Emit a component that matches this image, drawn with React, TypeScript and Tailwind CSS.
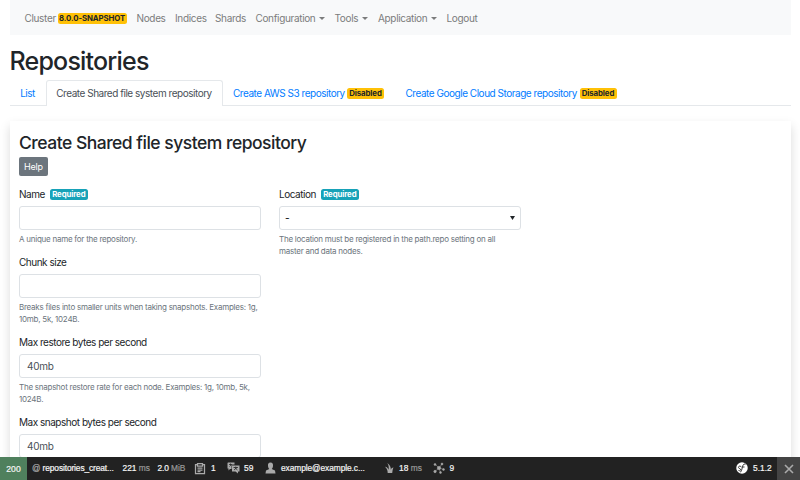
import type { ReactNode } from "react";

function Caret() {
  return (
    <svg viewBox="0 0 6 3" className="h-[3px] w-[6px] shrink-0 fill-[#7b7c7c]">
      <path d="M0 0h6L3 3z" />
    </svg>
  );
}

function Badge({ tone, width, children }: { tone: "warning" | "info"; width: string; children: ReactNode }) {
  const colors = tone === "warning" ? "bg-[#ffc107] text-[#212529]" : "bg-[#17a2b8] text-white";
  return (
    <span
      className={`flex h-[11px] shrink-0 items-center justify-center whitespace-nowrap rounded-[2.5px] text-[7.8px] font-bold leading-none tracking-[-0.1px] ${colors} ${width}`}
    >
      {children}
    </span>
  );
}

function NavItem({ width, caret, children }: { width: string; caret?: boolean; children: ReactNode }) {
  return (
    <a className={`flex shrink-0 items-center justify-between whitespace-nowrap ${width}`}>
      <span>{children}</span>
      {caret && <Caret />}
    </a>
  );
}

function Field({ label, required, help, children }: { label: string; required?: boolean; help?: ReactNode; children?: ReactNode }) {
  return (
    <div className="mb-[7px] w-[242px]">
      <div className="flex h-[22px] items-start gap-[5px] whitespace-nowrap leading-[20px] tracking-[-0.48px]">
        {label}
        {required && (
          <span className="mt-[5px]">
            <Badge tone="info" width="w-[38px]">Required</Badge>
          </span>
        )}
      </div>
      <div className="flex h-[24px] items-center rounded-[3px] border border-[#dde1e5] px-[7px] tracking-[-0.25px] text-[#495057]">{children}</div>
      <div className="mt-[3px] whitespace-nowrap text-[8px] leading-[12px] tracking-[-0.25px] text-[#6c757d]">{help}</div>
    </div>
  );
}

function Toolbar() {
  return (
    <footer className="absolute inset-x-0 bottom-0 flex h-[23px] items-center whitespace-nowrap bg-[#222] font-['Liberation_Sans',Arial,sans-serif] text-[8.4px] text-[#f5f5f5] [-webkit-text-stroke:0.2px]">
      <div className="flex h-full w-[27px] items-center justify-center bg-[#4f805d] pt-px text-[8.6px]">200</div>
      <div className="ml-[5px] w-[90.5px] tracking-[-0.12px]"><span className="text-[#aaa]">@</span> repositories_creat...</div>
      <div className="w-[35px]">221 <span className="text-[#999]">ms</span></div>
      <div className="w-[36.5px] tracking-[-0.1px]">2.0 <span className="text-[#999]">MiB</span></div>
      <div className="flex w-[33px] items-center gap-[5px]">
        <svg viewBox="0 0 24 24" className="h-[13px] w-[12px] fill-none stroke-[#aaa] stroke-[2.5]">
          <path d="M6 4H3v18h18V4h-3M7 2h10v5H7zM7 11h10M7 15h10M7 18h6" />
        </svg>
        1
      </div>
      <div className="flex w-[38px] items-center gap-[4px]">
        <svg viewBox="0 0 26 24" className="h-[12px] w-[13px]">
          <path d="M2 1h13v4H9v9H6l-3 3v-4H1V2z" fill="#aaa" />
          <path d="M10 7h15v12h-3v4l-5-4h-7z" fill="#aaa" />
          <path d="M4 5h6M7 3v3M5 9l3-3M13 11h9M17.5 9v2M14 16l6-5M15 11l6 5" fill="none" stroke="#222" strokeWidth="1.5" />
        </svg>
        59
      </div>
      <div className="flex w-[120px] items-center gap-[5px] tracking-[-0.08px]">
        <svg viewBox="0 0 20 24" className="h-[12px] w-[11px] fill-[#aaa]">
          <path d="M10 1c-4 0-5.5 3-5 7 .3 3 1.5 5 2.5 6L1 17l-1 6h20l-1-6-6.5-3c1-1 2.2-3 2.5-6 .5-4-1-7-5-7z" />
        </svg>
        example@example.c...
      </div>
      <div className="flex w-[47.5px] items-center gap-[5px]">
        <svg viewBox="0 0 20 24" className="h-[12px] w-[9px]">
          <path d="M0 9c4 0 7 4 8 7 1-6 0-11-3-15 6 4 8 9 8 15 1-3 3-5 6-5-2 3-2 7-3 12H6C6 17 4 12 0 9z" fill="#aaa" />
        </svg>
        <span>18 <span className="text-[#999]">ms</span></span>
      </div>
      <div className="flex items-center gap-[5px]">
        <svg viewBox="0 0 24 24" className="h-[12px] w-[12px] fill-[#aaa] stroke-[#aaa]">
          <path d="m12 12-8-8m8 8 6-8m-6 8 10 3m-10-3-8 7m8-7 3 9" strokeWidth="1" />
          <circle cx="12" cy="12" r="3.5" /><circle cx="4" cy="5" r="2" /><circle cx="18" cy="4" r="2" />
          <circle cx="21" cy="15" r="2" /><circle cx="4" cy="19" r="2.5" /><circle cx="15" cy="21" r="2" />
        </svg>
        9
      </div>
      <div className="ml-auto flex w-[41px] items-center gap-[5px]">
        <svg viewBox="0 0 24 24" className="h-[12px] w-[12px]">
          <circle cx="12" cy="12" r="11.5" fill="#fff" />
          <path d="M10 9c-6-3-6 4-3 4 4 1 2 6-2 4M8 20c4 1 4-12 7-15 2-2 4 0 3 1M11 10h6" fill="none" stroke="#222" strokeWidth="1.8" />
        </svg>
        5.1.2
      </div>
      <div className="flex h-full w-[23px] items-center justify-center bg-[#444]">
        <svg viewBox="0 0 10 10" className="h-[10px] w-[10px] fill-none stroke-[#aaa] stroke-[1.6]">
          <path d="m1 1 8 8M9 1 1 9" />
        </svg>
      </div>
    </footer>
  );
}

export default function App() {
  return (
    <div className="relative h-[480px] w-[800px] overflow-hidden bg-white px-[9.5px] font-[Inter,sans-serif] text-[10px] text-[#212529]">
      <nav className="flex h-[35px] items-center gap-[10px] bg-[#f8f9fa] pl-[15px] pt-px tracking-[-0.34px] text-[#7b7c7c]">
        <a className="flex w-[102px] shrink-0 items-center justify-between">
          Cluster
          <span className="mt-px"><Badge tone="warning" width="w-[69px]">8.0.0-SNAPSHOT</Badge></span>
        </a>
        <NavItem width="w-[28.5px]">Nodes</NavItem>
        <NavItem width="w-[30px]">Indices</NavItem>
        <NavItem width="w-[30.5px]">Shards</NavItem>
        <NavItem width="w-[69px]" caret>Configuration</NavItem>
        <NavItem width="w-[33.5px]" caret>Tools</NavItem>
        <NavItem width="w-[58.5px]" caret>Application</NavItem>
        <NavItem width="w-[31px]">Logout</NavItem>
      </nav>
      <h1 className="h-[45px] pt-[11px] text-[25px] font-medium leading-[31px] tracking-[-0.8px]">Repositories</h1>
      <div className="flex h-[26px] items-stretch whitespace-nowrap border-b border-[#e5e8eb] tracking-[-0.47px] text-[#007bff]">
        <a className="flex w-[36px] items-center justify-center pt-px">List</a>
        <a className="-mb-px flex w-[177px] items-center justify-center rounded-t-[3px] border border-b-0 border-[#e5e8eb] bg-white text-[#495057]">
          Create Shared file system repository
        </a>
        <a className="flex w-[173px] items-center pl-[10.5px] pt-px">
          <span className="w-[114px]">Create AWS S3 repository</span>
          <span className="mt-px"><Badge tone="warning" width="w-[37px]">Disabled</Badge></span>
        </a>
        <a className="flex items-center pl-[10px] pt-px">
          <span className="w-[174px]">Create Google Cloud Storage repository</span>
          <span className="mt-px"><Badge tone="warning" width="w-[37px]">Disabled</Badge></span>
        </a>
      </div>
      <main className="mt-[15px] h-[500px] px-[9.5px] pt-[10px] shadow-[0_5px_10px_rgba(0,0,0,0.15)]">
        <h2 className="h-[26px] pt-px text-[17.5px] font-medium leading-[22px] tracking-[-0.5px]">Create Shared file system repository</h2>
        <button className="flex h-[19px] w-[29px] items-center justify-center rounded-[2px] bg-[#6c757d] text-[9px] tracking-[-0.2px] text-white">Help</button>
        <div className="mt-[8px] flex gap-[18px]">
          <div>
            <Field label="Name" required help="A unique name for the repository." />
            <Field label="Chunk size" help={<>Breaks files into smaller units when taking snapshots. Examples: 1g,<br />10mb, 5k, 1024B.</>} />
            <Field label="Max restore bytes per second" help={<>The snapshot restore rate for each node. Examples: 1g, 10mb, 5k,<br />1024B.</>}>40mb</Field>
            <Field label="Max snapshot bytes per second">40mb</Field>
          </div>
          <Field label="Location" required help={<>The location must be registered in the path.repo setting on all<br />master and data nodes.</>}>
            <span className="-ml-[2px] flex-1 pt-px font-medium text-[#212529]">-</span>
            <svg viewBox="0 0 5 4" className="-mr-[2px] h-[4px] w-[5px] fill-[#212529]"><path d="M0 0h5L2.5 4z" /></svg>
          </Field>
        </div>
      </main>
      <Toolbar />
    </div>
  );
}
